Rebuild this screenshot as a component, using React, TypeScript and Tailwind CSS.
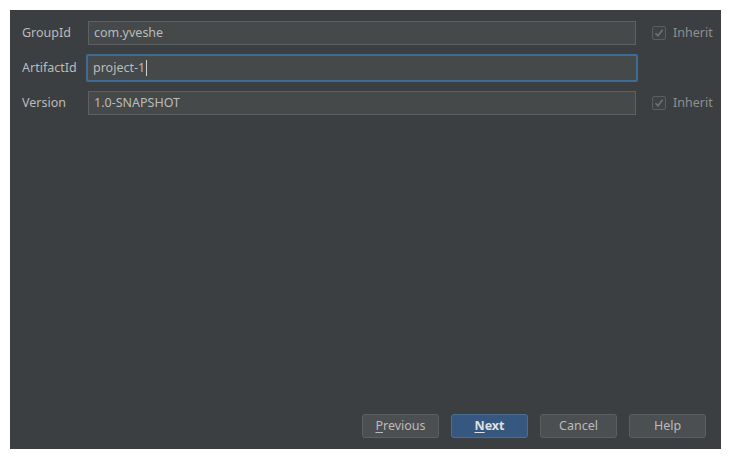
import React from "react";

const font = { fontFamily: '"Noto Sans", "Open Sans", "Liberation Sans", sans-serif' };

function Check() {
  return (
    <div className="flex items-center gap-[7px] ml-[16px]">
      <div className="w-[14px] h-[14px] border border-[#5b5e60] bg-[#3f4244] rounded-[2px] flex items-center justify-center">
        <svg width="10" height="10" viewBox="0 0 10 10">
          <path d="M1.5 5.2 L4 7.8 L8.6 1.8" fill="none" stroke="#6f7274" strokeWidth="1.6" />
        </svg>
      </div>
      <span className="text-[12.5px] text-[#8e9091] leading-none">Inherit</span>
    </div>
  );
}

export default function App() {
  return (
    <div className="w-[731px] h-[459px] bg-white p-[10px]" style={font}>
      <div className="w-[711px] h-[439px] bg-[#3c3f41] flex flex-col text-[#bbbbbb]">
        <div className="flex flex-col pl-[12px] pt-[11px]">
          <div className="flex items-center h-[24px]">
            <div className="w-[66px] text-[12.5px]">GroupId</div>
            <div className="w-[548px] h-[24px] bg-[#45494a] border border-[#5e6163] flex items-center pl-[5px] text-[12.5px]">
              com.yveshe
            </div>
            <Check />
          </div>
          <div className="flex items-center h-[28px] mt-[9px]">
            <div className="w-[64px] text-[12.5px] pl-0">ArtifactId</div>
            <div className="w-[552px] h-[28px] border-2 border-[#3f6b94] rounded-[2px] bg-[#45494a] flex items-center pl-[5px] text-[12.5px]">
              project-1<span className="inline-block w-[1px] h-[16px] bg-[#d0d0d0] ml-[1px]" />
            </div>
          </div>
          <div className="flex items-center h-[24px] mt-[9px]">
            <div className="w-[66px] text-[12.5px]">Version</div>
            <div className="w-[548px] h-[24px] bg-[#45494a] border border-[#5e6163] flex items-center pl-[5px] text-[12.5px]">
              1.0-SNAPSHOT
            </div>
            <Check />
          </div>
        </div>
        <div className="flex-1" />
        <div className="flex justify-end gap-[12px] pr-[15px] pb-[11px]">
          <button className="w-[77px] h-[24px] rounded-[3px] bg-[#4b4f51] border border-[#5c5f61] text-[12.5px] text-[#bbbbbb] flex items-center justify-center">
            <span><span className="underline underline-offset-2">P</span>revious</span>
          </button>
          <button className="w-[77px] h-[24px] rounded-[3px] bg-[#365880] border border-[#4a6f93] text-[12.5px] text-[#e0e0e0] font-bold flex items-center justify-center">
            <span><span className="underline underline-offset-2">N</span>ext</span>
          </button>
          <button className="w-[77px] h-[24px] rounded-[3px] bg-[#4b4f51] border border-[#5c5f61] text-[12.5px] text-[#bbbbbb] flex items-center justify-center">
            Cancel
          </button>
          <button className="w-[77px] h-[24px] rounded-[3px] bg-[#4b4f51] border border-[#5c5f61] text-[12.5px] text-[#bbbbbb] flex items-center justify-center">
            Help
          </button>
        </div>
      </div>
    </div>
  );
}
